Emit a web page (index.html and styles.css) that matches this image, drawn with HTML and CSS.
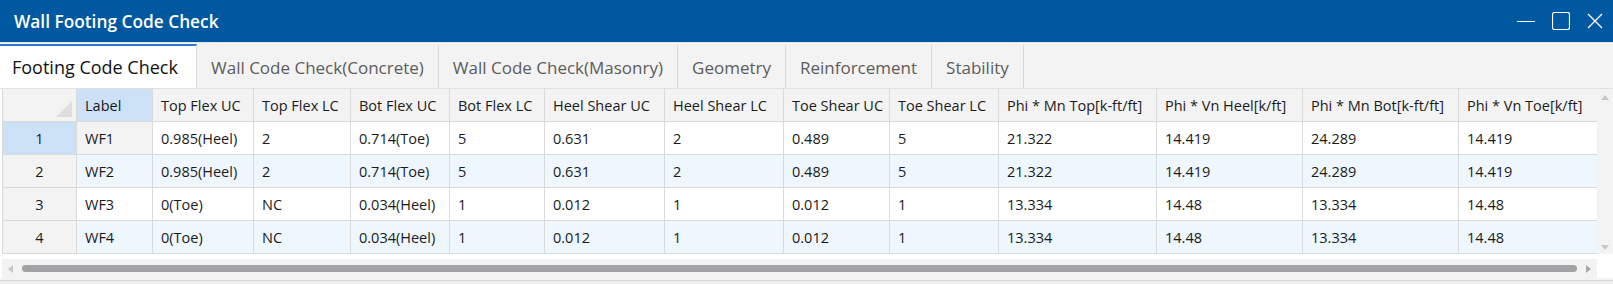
FILE: index.html
```html
<!DOCTYPE html>
<html lang="en">
<head>
  <meta charset="UTF-8">
  <title>Wall Footing Code Check</title>
  <link rel="stylesheet" href="styles.css">
</head>
<body>

  <div class="window">
    <div class="titlebar">
      <div class="title">Wall Footing Code Check</div>
      <div class="controls">
        <svg width="18" height="18" viewBox="0 0 18 18"><line x1="0" y1="9.5" x2="18" y2="9.5" stroke="#fff" stroke-width="1"/></svg>
        <svg width="18" height="18" viewBox="0 0 18 18"><rect x="0.5" y="0.5" width="17" height="17" rx="2" fill="none" stroke="#fff" stroke-width="1.2"/></svg>
        <svg width="16" height="16" viewBox="0 0 16 16"><path d="M1 1 L15 15 M15 1 L1 15" stroke="#fff" stroke-width="1.3"/></svg>
      </div>
    </div>

    <div class="tabs">
      <div class="tab active">Footing Code Check</div>
      <div class="tab">Wall Code Check(Concrete)</div>
      <div class="tab">Wall Code Check(Masonry)</div>
      <div class="tab">Geometry</div>
      <div class="tab">Reinforcement</div>
      <div class="tab">Stability</div>
    </div>

    <div class="content">
      <div class="grid-wrap">
        <div class="grid">
          <div class="cell head corner"><span class="corner-mark"></span></div>
          <div class="cell head selected">Label</div>
          <div class="cell head">Top Flex UC</div>
          <div class="cell head">Top Flex LC</div>
          <div class="cell head">Bot Flex UC</div>
          <div class="cell head">Bot Flex LC</div>
          <div class="cell head">Heel Shear UC</div>
          <div class="cell head">Heel Shear LC</div>
          <div class="cell head">Toe Shear UC</div>
          <div class="cell head">Toe Shear LC</div>
          <div class="cell head">Phi * Mn Top[k-ft/ft]</div>
          <div class="cell head">Phi * Vn Heel[k/ft]</div>
          <div class="cell head">Phi * Mn Bot[k-ft/ft]</div>
          <div class="cell head">Phi * Vn Toe[k/ft]</div>

          <div class="cell rowhead selected">1</div>
          <div class="cell current">WF1</div>
          <div class="cell">0.985(Heel)</div>
          <div class="cell">2</div>
          <div class="cell">0.714(Toe)</div>
          <div class="cell">5</div>
          <div class="cell">0.631</div>
          <div class="cell">2</div>
          <div class="cell">0.489</div>
          <div class="cell">5</div>
          <div class="cell">21.322</div>
          <div class="cell">14.419</div>
          <div class="cell">24.289</div>
          <div class="cell">14.419</div>

          <div class="cell rowhead">2</div>
          <div class="cell alt">WF2</div>
          <div class="cell alt">0.985(Heel)</div>
          <div class="cell alt">2</div>
          <div class="cell alt">0.714(Toe)</div>
          <div class="cell alt">5</div>
          <div class="cell alt">0.631</div>
          <div class="cell alt">2</div>
          <div class="cell alt">0.489</div>
          <div class="cell alt">5</div>
          <div class="cell alt">21.322</div>
          <div class="cell alt">14.419</div>
          <div class="cell alt">24.289</div>
          <div class="cell alt">14.419</div>

          <div class="cell rowhead">3</div>
          <div class="cell">WF3</div>
          <div class="cell">0(Toe)</div>
          <div class="cell">NC</div>
          <div class="cell">0.034(Heel)</div>
          <div class="cell">1</div>
          <div class="cell">0.012</div>
          <div class="cell">1</div>
          <div class="cell">0.012</div>
          <div class="cell">1</div>
          <div class="cell">13.334</div>
          <div class="cell">14.48</div>
          <div class="cell">13.334</div>
          <div class="cell">14.48</div>

          <div class="cell rowhead">4</div>
          <div class="cell alt">WF4</div>
          <div class="cell alt">0(Toe)</div>
          <div class="cell alt">NC</div>
          <div class="cell alt">0.034(Heel)</div>
          <div class="cell alt">1</div>
          <div class="cell alt">0.012</div>
          <div class="cell alt">1</div>
          <div class="cell alt">0.012</div>
          <div class="cell alt">1</div>
          <div class="cell alt">13.334</div>
          <div class="cell alt">14.48</div>
          <div class="cell alt">13.334</div>
          <div class="cell alt">14.48</div>
        </div>

        <div class="vscroll">
          <span class="arrow up"></span>
          <span class="arrow down"></span>
        </div>
      </div>

      <div class="hscroll">
        <span class="arrow left"></span>
        <div class="thumb"></div>
        <span class="arrow right"></span>
      </div>
    </div>

    <div class="statusbar"></div>
  </div>

</body>
</html>
```
FILE: styles.css
```css
body, html {
  margin: 0;
  padding: 0;
  width: 1613px;
  height: 284px;
  overflow: hidden;
  font-family: "Open Sans", "Liberation Sans", sans-serif;
  background-color: #f3f3f3;
  color: #1b1b1b;
}

.window {
  display: flex;
  flex-direction: column;
  height: 284px;
}

.titlebar {
  height: 42px;
  flex: none;
  background-color: #0058a0;
  display: flex;
  align-items: center;
  justify-content: space-between;
  padding: 0 10px 0 14px;
  box-sizing: border-box;
}

.title {
  color: #fff;
  font-size: 17.3px;
  font-weight: 600;
}

.controls {
  display: flex;
  align-items: center;
  gap: 17px;
}

.tabs {
  height: 46px;
  flex: none;
  display: flex;
  box-sizing: border-box;
  border-top: 1px solid #e4e4e4;
  padding-top: 1px;
  background-color: #f3f3f3;
}

.tab {
  display: flex;
  align-items: center;
  padding: 0 14px;
  font-size: 17px;
  color: #5c5c5c;
  border-right: 1px solid #d9d9d9;
  border-top: 2px solid transparent;
  box-sizing: border-box;
}

.tab.active {
  background-color: #fff;
  color: #111;
  font-size: 18px;
  border-top-color: #2a7bd0;
  width: 197px;
  padding-left: 12px;
}

.content {
  background-color: #fff;
  border-top: 1px solid #e0e0e0;
  padding-left: 2px;
}

.grid-wrap {
  display: flex;
}

.grid {
  display: grid;
  grid-template-columns: 74px 76px 101px 97px 99px 95px 120px 119px 106px 109px 158px 146px 156px 139px;
  grid-auto-rows: 33px;
  border-left: 1px solid #dadada;
  width: 1595px;
  box-sizing: border-box;
  font-size: 14.5px;
}

.cell {
  display: flex;
  align-items: center;
  padding-left: 8px;
  border-right: 1px solid #dadada;
  border-bottom: 1px solid #dadada;
  background-color: #fff;
  white-space: nowrap;
  overflow: hidden;
}

.cell.head {
  background-color: #f3f3f3;
}

.cell.corner {
  position: relative;
}

.corner-mark {
  position: absolute;
  right: 4px;
  bottom: 4px;
  width: 0;
  height: 0;
  border-left: 16px solid transparent;
  border-bottom: 16px solid #dedede;
}

.cell.selected {
  background-color: #cce1f6;
}

.cell.rowhead {
  justify-content: center;
  padding-left: 0;
  background-color: #f3f3f3;
}

.cell.rowhead.selected {
  background-color: #cce1f6;
}

.cell.current {
  background-color: #f3f3f3;
}

.cell.alt {
  background-color: #eef6fe;
}

.vscroll {
  width: 16px;
  background-color: #f3f3f3;
  display: flex;
  flex-direction: column;
  justify-content: space-between;
  align-items: center;
  padding: 6px 0 4px;
  box-sizing: border-box;
}

.arrow {
  width: 0;
  height: 0;
}

.arrow.up {
  border-left: 4px solid transparent;
  border-right: 4px solid transparent;
  border-bottom: 5px solid #c8c8c8;
}

.arrow.down {
  border-left: 4px solid transparent;
  border-right: 4px solid transparent;
  border-top: 5px solid #c8c8c8;
}

.hscroll {
  margin-top: 5px;
  width: 1595px;
  height: 19px;
  display: flex;
  align-items: center;
  gap: 9px;
  padding: 0 6px;
  box-sizing: border-box;
  background-color: #f3f3f3;
}

.arrow.left {
  border-top: 4px solid transparent;
  border-bottom: 4px solid transparent;
  border-right: 5px solid #c8c8c8;
}

.arrow.right {
  border-top: 4px solid transparent;
  border-bottom: 4px solid transparent;
  border-left: 5px solid #a6a6a8;
}

.thumb {
  flex: 1;
  height: 7px;
  border-radius: 4px;
  background-color: #a3a3a6;
}

.statusbar {
  flex: 1;
  margin-top: 2px;
  border-top: 1px solid #d6d6d6;
  background-color: #eeeeee;
}
```
